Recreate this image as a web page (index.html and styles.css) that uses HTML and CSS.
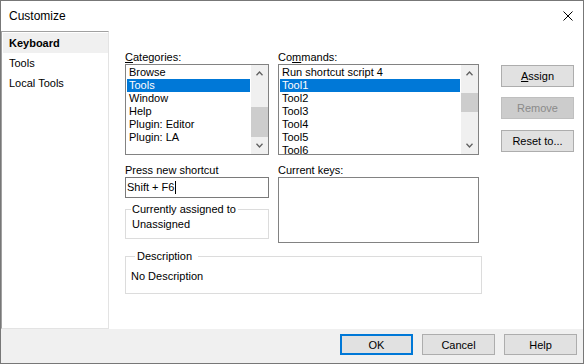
FILE: index.html
```html
<!DOCTYPE html>
<html lang="en">
<head>
    <meta charset="UTF-8">
    <title>Customize</title>
    <link rel="stylesheet" href="styles.css">
</head>
<body>
    <div class="window">
        <div class="titlebar">
            <span class="title">Customize</span>
            <svg class="close" width="10" height="10" viewBox="0 0 10 10">
                <path d="M0.5 0.5 L9.5 9.5 M9.5 0.5 L0.5 9.5" stroke="#000" stroke-width="1" fill="none"/>
            </svg>
        </div>

        <div class="main">
            <ul class="nav">
                <li class="active">Keyboard</li>
                <li>Tools</li>
                <li>Local Tools</li>
            </ul>

            <div class="content">
                <div class="row top-row">
                    <div class="col cat-col">
                        <div class="label"><u>C</u>ategories:</div>
                        <div class="listbox">
                            <ul class="items">
                                <li>Browse</li>
                                <li class="selected">Tools</li>
                                <li>Window</li>
                                <li>Help</li>
                                <li>Plugin: Editor</li>
                                <li>Plugin: LA</li>
                            </ul>
                            <div class="scrollbar">
                                <div class="arrow">
                                    <svg width="7" height="5" viewBox="0 0 7 5"><polyline points="0.5,4.2 3.5,1 6.5,4.2" fill="none" stroke="#606060" stroke-width="1.3"/></svg>
                                </div>
                                <div class="track">
                                    <div class="thumb thumb-end"></div>
                                </div>
                                <div class="arrow">
                                    <svg width="7" height="5" viewBox="0 0 7 5"><polyline points="0.5,0.8 3.5,4 6.5,0.8" fill="none" stroke="#606060" stroke-width="1.3"/></svg>
                                </div>
                            </div>
                        </div>
                    </div>

                    <div class="col cmd-col">
                        <div class="label">Co<u>m</u>mands:</div>
                        <div class="listbox">
                            <ul class="items">
                                <li>Run shortcut script 4</li>
                                <li class="selected">Tool1</li>
                                <li>Tool2</li>
                                <li>Tool3</li>
                                <li>Tool4</li>
                                <li>Tool5</li>
                                <li>Tool6</li>
                            </ul>
                            <div class="scrollbar">
                                <div class="arrow">
                                    <svg width="7" height="5" viewBox="0 0 7 5"><polyline points="0.5,4.2 3.5,1 6.5,4.2" fill="none" stroke="#606060" stroke-width="1.3"/></svg>
                                </div>
                                <div class="track">
                                    <div class="thumb thumb-small"></div>
                                </div>
                                <div class="arrow">
                                    <svg width="7" height="5" viewBox="0 0 7 5"><polyline points="0.5,0.8 3.5,4 6.5,0.8" fill="none" stroke="#606060" stroke-width="1.3"/></svg>
                                </div>
                            </div>
                        </div>
                    </div>

                    <div class="side-buttons">
                        <button class="btn"><u>A</u>ssign</button>
                        <button class="btn" disabled>Remove</button>
                        <button class="btn reset">Reset to...</button>
                    </div>
                </div>

                <div class="row mid-row">
                    <div class="col cat-col">
                        <div class="label">Press new shortcut</div>
                        <div class="textbox">Shift + F6<span class="caret"></span></div>
                        <fieldset class="group assigned">
                            <legend>Currently assigned to</legend>
                            <div>Unassigned</div>
                        </fieldset>
                    </div>
                    <div class="col keys-col">
                        <div class="label">Current keys:</div>
                        <div class="keys-box"></div>
                    </div>
                </div>

                <fieldset class="group description">
                    <legend>Description</legend>
                    <div>No Description</div>
                </fieldset>
            </div>
        </div>

        <div class="footer">
            <button class="btn default">OK</button>
            <button class="btn">Cancel</button>
            <button class="btn">Help</button>
        </div>
    </div>
</body>
</html>
```

FILE: styles.css
```css
body {
    margin: 0;
    font-family: 'Liberation Sans', Arial, sans-serif;
    font-size: 11px;
    color: #000;
    background-color: #fff;
}
ul {
    list-style: none;
    margin: 0;
    padding: 0;
}
u {
    text-decoration: underline;
    text-underline-offset: 1px;
}
.window {
    width: 584px;
    height: 364px;
    box-sizing: border-box;
    border: 1px solid #777;
    display: flex;
    flex-direction: column;
    background-color: #fff;
}
.titlebar {
    height: 30px;
    flex-shrink: 0;
    display: flex;
    align-items: center;
    padding-left: 8px;
}
.title {
    font-size: 12px;
}
.close {
    margin-left: auto;
    margin-right: 10px;
}
.main {
    height: 298px;
    display: flex;
}
.nav {
    width: 108px;
    box-sizing: border-box;
    border-top: 1px solid #a0a0a0;
    border-left: 1px solid #a0a0a0;
    border-right: 1px solid #e3e3e3;
    border-bottom: 1px solid #e3e3e3;
    padding: 1px 0 0 1px;
}
.nav li {
    height: 20px;
    line-height: 20px;
    padding-left: 6px;
}
.nav li.active {
    background-color: #f0f0f0;
    font-weight: bold;
}
.content {
    flex: 1;
    padding: 20px 0 0 16px;
}
.row {
    display: flex;
    gap: 9px;
}
.label {
    height: 13px;
    line-height: 13px;
}
.cat-col {
    width: 144px;
}
.cmd-col {
    width: 201px;
}
.keys-col {
    width: 201px;
}
.listbox {
    height: 91px;
    box-sizing: border-box;
    border: 1px solid #828282;
    display: flex;
}
.items {
    flex: 1;
    padding: 1px;
    overflow: hidden;
}
.items li {
    height: 13px;
    line-height: 13px;
    padding-left: 2px;
    white-space: nowrap;
}
.items li.selected {
    background-color: #0078d7;
    color: #fff;
}
.scrollbar {
    width: 17px;
    background-color: #f0f0f0;
    display: flex;
    flex-direction: column;
}
.arrow {
    height: 17px;
    display: flex;
    align-items: center;
    justify-content: center;
}
.track {
    flex: 1;
    display: flex;
    flex-direction: column;
}
.thumb {
    background-color: #cdcdcd;
}
.thumb-end {
    height: 30px;
    margin-top: auto;
}
.thumb-small {
    height: 19px;
    margin-top: 11px;
}
.side-buttons {
    margin-left: 13px;
    padding-top: 14px;
    display: flex;
    flex-direction: column;
    gap: 10px;
}
.side-buttons .reset {
    margin-top: 1px;
}
.btn {
    width: 73px;
    height: 22px;
    box-sizing: border-box;
    padding: 0;
    font-family: inherit;
    font-size: 11px;
    color: #000;
    background-color: #e1e1e1;
    border: 1px solid #adadad;
}
.btn:disabled {
    background-color: #cccccc;
    border-color: #bfbfbf;
    color: #8a8a8a;
}
.mid-row {
    margin-top: 9px;
}
.textbox {
    height: 21px;
    line-height: 19px;
    box-sizing: border-box;
    border: 1px solid #7a7a7a;
    padding-left: 1px;
    display: flex;
    align-items: center;
}
.caret {
    display: inline-block;
    width: 1px;
    height: 13px;
    background-color: #000;
    margin-left: 1px;
}
.group {
    margin: 0;
    border: 1px solid #dcdcdc;
    min-width: 0;
}
.group legend {
    line-height: 13px;
}
.group div {
    line-height: 13px;
}
.assigned {
    margin-top: 5px;
    padding: 2px 6px 7px 6px;
}
.assigned legend {
    padding: 0 2px 0 1px;
    margin-left: -1px;
}
.keys-box {
    height: 66px;
    box-sizing: border-box;
    border: 1px solid #828282;
}
.description {
    width: 357px;
    box-sizing: border-box;
    margin-top: 7px;
    padding: 7px 5px 10px 5px;
}
.description legend {
    padding: 0 6px 0 2px;
    margin-left: 4px;
}
.footer {
    height: 34px;
    flex-shrink: 0;
    background-color: #f0f0f0;
    display: flex;
    justify-content: flex-end;
    gap: 9px;
    padding: 5px 6px 0 0;
    box-sizing: border-box;
}
.footer .btn {
    height: 21px;
}
.footer .default {
    border: 2px solid #0078d7;
}
```
